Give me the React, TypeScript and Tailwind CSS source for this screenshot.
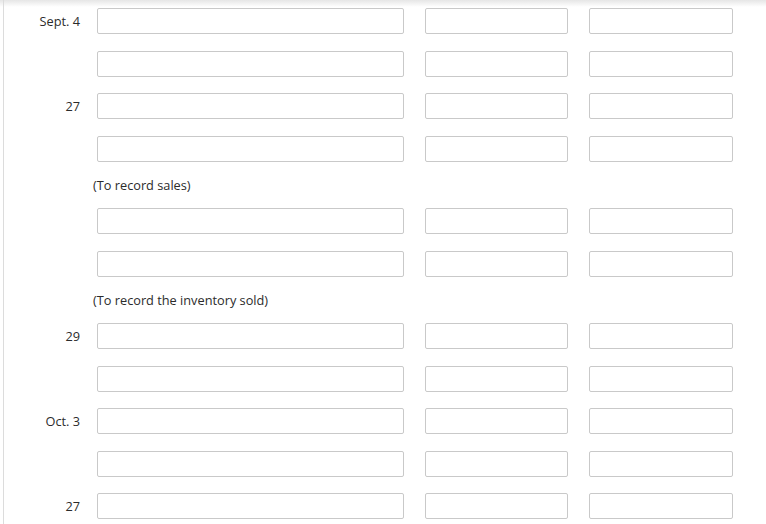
import React from "react";

type Item = { kind: "row"; label?: string } | { kind: "note"; text: string };

const items: Item[] = [
  { kind: "row", label: "Sept. 4" },
  { kind: "row" },
  { kind: "row", label: "27" },
  { kind: "row" },
  { kind: "note", text: "(To record sales)" },
  { kind: "row" },
  { kind: "row" },
  { kind: "note", text: "(To record the inventory sold)" },
  { kind: "row", label: "29" },
  { kind: "row" },
  { kind: "row", label: "Oct. 3" },
  { kind: "row" },
  { kind: "row", label: "27" },
];

const inputCls =
  "h-[26px] border border-[#c9c9c9] rounded-[2px] bg-white outline-none";

export default function App() {
  return (
    <div
      className="relative w-[766px] h-[524px] overflow-hidden bg-white text-[#2b2b2b] text-[12.75px]"
      style={{ fontFamily: '"Open Sans", "DejaVu Sans", sans-serif' }}
    >
      <div className="absolute left-0 top-0 w-full h-[7px] bg-gradient-to-b from-[#e6e6e6] to-white" />
      <div className="absolute left-[3px] top-0 h-full w-[1px] bg-[#dcdcdc]" />
      <div className="flex flex-col pt-[8px]">
        {items.map((it, i) =>
          it.kind === "row" ? (
            <div key={i} className="flex h-[42.5px] items-start">
              <div className="w-[80px] h-[26px] flex items-center justify-end leading-none">
                {it.label ?? ""}
              </div>
              <input className={`${inputCls} ml-[17px] w-[307px]`} />
              <input className={`${inputCls} ml-[21px] w-[143px]`} />
              <input className={`${inputCls} ml-[21px] w-[144px]`} />
            </div>
          ) : (
            <div key={i} className="h-[30px] pl-[93px] leading-[14px]">
              {it.text}
            </div>
          )
        )}
      </div>
    </div>
  );
}
